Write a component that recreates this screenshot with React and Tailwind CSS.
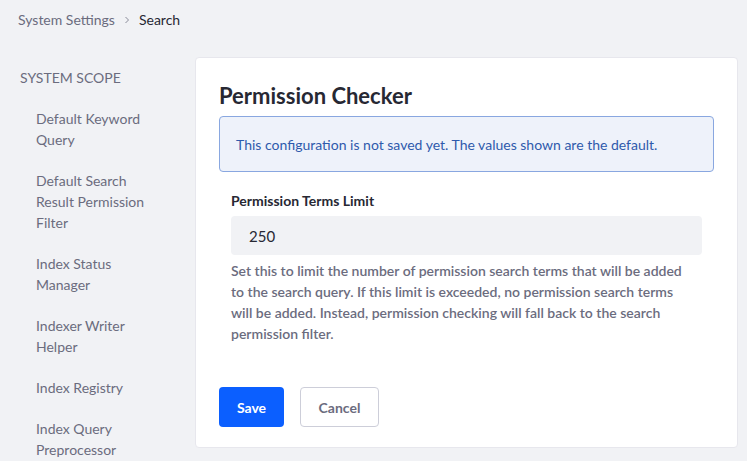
export default function App() {
  const items = [
    "Default Keyword Query",
    "Default Search Result Permission Filter",
    "Index Status Manager",
    "Indexer Writer Helper",
    "Index Registry",
    "Index Query Preprocessor",
  ];
  return (
    <div
      className="w-[747px] h-[461px] overflow-hidden bg-[#f1f2f5] text-[14px]"
      style={{ fontFamily: "Lato, 'Noto Sans', sans-serif" }}
    >
      <div className="h-[38px] pl-[18px] flex items-center gap-[8px] text-[14px] pt-[1px]">
        <span className="text-[#6b6c7e]">System Settings</span>
        <svg width="8" height="8" viewBox="0 0 8 8" className="text-[#8b8c9a]">
          <path d="M2.5 1 L5.5 4 L2.5 7" fill="none" stroke="currentColor" strokeWidth="1" />
        </svg>
        <span className="text-[#272833]">Search</span>
      </div>
      <div className="flex pt-[19px]">
        <div className="w-[195px] shrink-0">
          <div className="pl-[20px] text-[#6b6c7e] uppercase leading-[21px] mt-[10px]">System Scope</div>
          <div className="pt-[10px]">
            {items.map((t) => (
              <div key={t} className="pl-[36px] pr-[30px] py-[10px] leading-[21px] text-[#6b6c7e]">
                {t}
              </div>
            ))}
          </div>
        </div>
        <div className="w-[543px] h-[391px] bg-white rounded-[4px] border border-[#e7e7ed] px-[23px] pt-[23px]">
          <h1 className="text-[22px] font-bold text-[#272833] leading-[30px]">Permission Checker</h1>
          <div className="mt-[5px] h-[56px] rounded-[4px] border border-[#89a7e0] bg-[#eef2fa] text-[#2e5aac] pl-[16px] flex items-center">
            This configuration is not saved yet. The values shown are the default.
          </div>
          <div className="px-[12px] mt-[19px]">
            <div className="font-bold text-[#272833] leading-[20px]">Permission Terms Limit</div>
            <div className="mt-[5px] h-[39px] w-[471px] rounded-[4px] bg-[#f1f2f5] flex items-center pl-[18px] pt-[2px] text-[#272833] text-[15px]">
              250
            </div>
            <div className="mt-[5px] text-[#6b6c7e] font-semibold leading-[21px] w-[462px]">
              Set this to limit the number of permission search terms that will be added to the search query. If this limit is exceeded, no permission search terms will be added. Instead, permission checking will fall back to the search permission filter.
            </div>
          </div>
          <div className="mt-[43px] flex gap-[16px]">
            <button className="h-[40px] w-[65px] rounded-[4px] bg-[#0b5fff] text-white font-bold">Save</button>
            <button className="h-[40px] w-[79px] rounded-[4px] border border-[#cdced9] bg-white text-[#6b6c7e] font-bold">Cancel</button>
          </div>
        </div>
      </div>
    </div>
  );
}
